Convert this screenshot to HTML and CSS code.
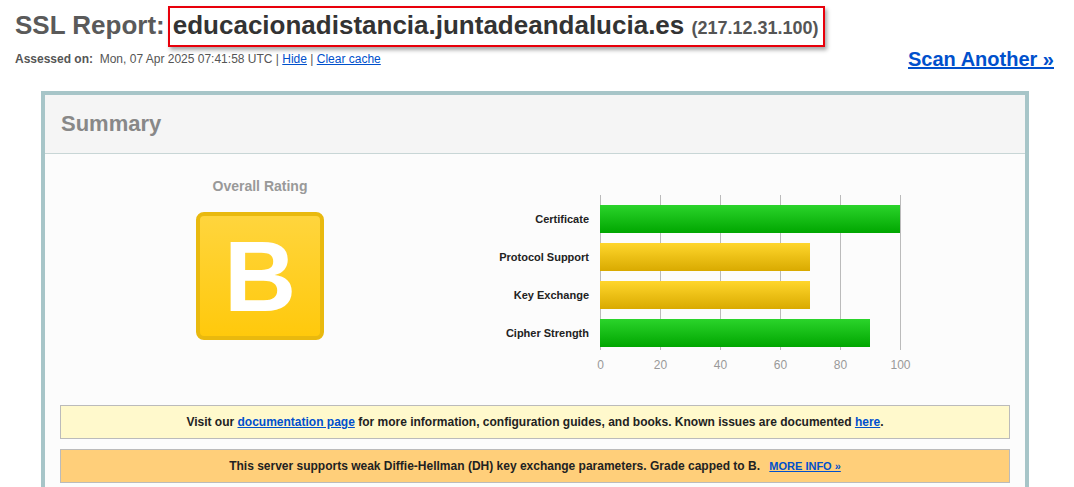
FILE: index.html
```html
<!DOCTYPE html>
<html lang="en">
<head>
<meta charset="utf-8">
<title>SSL Report</title>
<link rel="stylesheet" href="styles.css">
</head>
<body>
<div class="page">
  <h1 class="report-title">
    <span class="title-label">SSL Report:</span>
    <span class="host-box"><span class="host">educacionadistancia.juntadeandalucia.es</span> <span class="ip">(217.12.31.100)</span></span>
  </h1>
  <div class="meta-row">
    <div class="assessed"><b>Assessed on:</b>&nbsp; Mon, 07 Apr 2025 07:41:58 UTC | <a href="#">Hide</a> | <a href="#">Clear cache</a></div>
    <a class="scan-another" href="#">Scan Another &raquo;</a>
  </div>

  <section class="panel">
    <div class="panel-head">Summary</div>
    <div class="panel-body">
      <div class="summary">
        <div class="rating">
          <div class="rating-title">Overall Rating</div>
          <div class="grade">B</div>
        </div>
        <div class="chart">
          <div class="labels">
            <div class="label">Certificate</div>
            <div class="label">Protocol Support</div>
            <div class="label">Key Exchange</div>
            <div class="label">Cipher Strength</div>
          </div>
          <div class="plot">
            <div class="bar green" style="width:300px"></div>
            <div class="bar yellow" style="width:210px"></div>
            <div class="bar yellow" style="width:210px"></div>
            <div class="bar green" style="width:270px"></div>
          </div>
          <div></div>
          <div class="axis">
            <span>0</span><span>20</span><span>40</span><span>60</span><span>80</span><span>100</span>
          </div>
        </div>
      </div>
      <div class="notice info">Visit our <a href="#">documentation page</a> for more information, configuration guides, and books. Known issues are documented <a href="#">here</a>.</div>
      <div class="notice warn">This server supports weak Diffie-Hellman (DH) key exchange parameters. Grade capped to B. <a class="more" href="#">MORE INFO &raquo;</a></div>
    </div>
  </section>
</div>
</body>
</html>
```

FILE: styles.css
```css
* { box-sizing: border-box; }
html, body { margin: 0; padding: 0; background: #fff; }
body { font-family: "Liberation Sans", Arial, sans-serif; color: #222; }
a { color: #0050cc; }

.page { padding: 6px 0 0 0; }

.report-title {
  margin: 0 0 0 15px;
  display: flex;
  align-items: baseline;
  font-size: 26px;
  font-weight: bold;
  line-height: 30px;
}
.title-label { color: #5a5a5a; margin-right: 3px; }
.host-box {
  border: 2px solid #e8000b;
  padding: 2px 4px 2px 3px;
  box-shadow: 2px 3px 4px rgba(0,0,0,0.35);
  white-space: nowrap;
}
.host { color: #333; }
.ip { color: #555; font-size: 18px; }

.meta-row {
  display: flex;
  justify-content: space-between;
  align-items: center;
  height: 24px;
  margin-top: 1px;
  padding: 0 20px 0 15px;
}
.assessed { font-size: 12px; color: #555; margin-top: -2px; }
.assessed b { color: #555; }
.scan-another { font-size: 20px; font-weight: bold; color: #0050cc; margin-top: -2px; }

.panel {
  margin: 19px 45px 0 41px;
  border: 4px solid #a7c5c8;
  border-bottom: none;
  background: #fcfcfc;
}
.panel-head {
  height: 59px;
  background: #f5f5f5;
  border-bottom: 1px solid #c8d6d6;
  padding-left: 16px;
  font-size: 22px;
  font-weight: bold;
  color: #888;
  line-height: 58px;
}
.panel-body { padding: 0 15px 20px 15px; }

.summary { display: flex; margin-left: -15px; }
.rating {
  width: 430px;
  display: flex;
  flex-direction: column;
  align-items: center;
  padding-top: 24px;
}
.rating-title {
  font-size: 14px;
  font-weight: bold;
  color: #999;
  line-height: 16px;
}
.grade {
  margin-top: 18px;
  width: 128px;
  height: 128px;
  border: 4px solid #e9b90e;
  border-radius: 8px;
  background: linear-gradient(#ffd53d, #ffc90c);
  color: #fff;
  font-size: 100px;
  font-weight: bold;
  line-height: 120px;
  text-align: center;
}

.chart {
  padding-top: 41px;
  display: grid;
  grid-template-columns: 125px 301px;
}
.labels { padding-top: 10px; display: flex; flex-direction: column; gap: 10px; }
.label {
  height: 28px;
  line-height: 28px;
  text-align: right;
  padding-right: 11px;
  font-size: 11px;
  font-weight: bold;
  color: #222;
  white-space: nowrap;
}
.plot {
  padding: 10px 0 3px 0;
  display: flex;
  flex-direction: column;
  gap: 10px;
  background-image: repeating-linear-gradient(to right, #bbb 0, #bbb 1px, transparent 1px, transparent 60px);
}
.bar { height: 28px; }
.green { background: linear-gradient(#2bd42b, #00a600); }
.yellow { background: linear-gradient(#ffd62c, #d9aa00); }

.axis {
  margin-top: 8px;
  display: flex;
  justify-content: space-between;
  width: 301px;
}
.axis span {
  width: 1px;
  display: flex;
  justify-content: center;
  font-size: 12px;
  color: #999;
  line-height: 14px;
}

.notice {
  border: 1px solid #bbb;
  height: 34px;
  line-height: 32px;
  text-align: center;
  font-size: 12px;
  font-weight: bold;
  color: #222;
}
.info { margin-top: 33px; background: #fff9cc; }
.warn { margin-top: 10px; background: #ffcf7a; }
.more { font-size: 11px; margin-left: 6px; }
```
